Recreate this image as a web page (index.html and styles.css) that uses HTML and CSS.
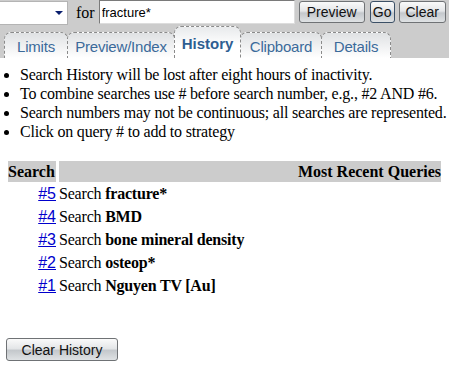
FILE: index.html
```html
<!DOCTYPE html>
<html lang="en">
<head>
    <link rel="stylesheet" href="styles.css">
    <meta charset="UTF-8">
    <title>Search History</title>
</head>
<body>
<div id="head">
    <div class="bar">
        <span class="sel"><span class="arrow"></span></span>
        <span class="for">for</span>
        <input type="text" class="query" value="fracture*">
        <input type="button" class="button btn-preview" value="Preview">
        <input type="button" class="button btn-go" value="Go">
        <input type="button" class="button btn-clear" value="Clear">
    </div>
    <div class="tabs">
        <span class="tab t-limits">Limits</span>
        <span class="tab t-preview">Preview/Index</span>
        <span class="tab active t-history">History</span>
        <span class="tab t-clip">Clipboard</span>
        <span class="tab t-details">Details</span>
    </div>
</div>

<ul class="notes">
    <li>Search History will be lost after eight hours of inactivity.</li>
    <li>To combine searches use # before search number, e.g., #2 AND #6.</li>
    <li>Search numbers may not be continuous; all searches are represented.</li>
    <li>Click on query # to add to strategy</li>
</ul>

<table class="hist">
    <tr>
        <th class="c-num">Search</th>
        <th class="c-q">Most Recent Queries</th>
    </tr>
    <tr><td class="c-num"><a href="#">#5</a></td><td>Search <b>fracture*</b></td></tr>
    <tr><td class="c-num"><a href="#">#4</a></td><td>Search <b>BMD</b></td></tr>
    <tr><td class="c-num"><a href="#">#3</a></td><td>Search <b>bone mineral density</b></td></tr>
    <tr><td class="c-num"><a href="#">#2</a></td><td>Search <b>osteop*</b></td></tr>
    <tr><td class="c-num"><a href="#">#1</a></td><td>Search <b>Nguyen TV [Au]</b></td></tr>
</table>

<input type="button" class="button btn-history" value="Clear History">
</body>
</html>
```

FILE: styles.css
```css
body {
    margin: 0;
    padding: 0;
    background: #fff;
    font-family: "Liberation Serif", "Times New Roman", serif;
    font-size: 16px;
    color: #000;
}

#head {
    background: #cccccc;
    height: 58px;
}

.bar {
    display: flex;
    align-items: flex-start;
    height: 26px;
}

.sel {
    display: block;
    width: 67px;
    height: 22px;
    margin-top: 1px;
    background: #fff;
    border: 1px solid #b4b4b4;
    border-left: 0;
    position: relative;
}

.arrow {
    position: absolute;
    left: 55px;
    top: 9px;
    border-left: 4px solid transparent;
    border-right: 4px solid transparent;
    border-top: 4px solid #0a1f6e;
}

.for {
    margin: 3px 0 0 8px;
    line-height: 20px;
}

.query {
    box-sizing: border-box;
    width: 196px;
    height: 24px;
    margin: 0 0 0 4px;
    padding: 1px 2px;
    border: 1px solid #7a7a7a;
    border-right-color: #ddd;
    border-bottom-color: #ddd;
    font-family: "Liberation Sans", Arial, sans-serif;
    font-size: 13px;
    background: #fff;
}

.button {
    box-sizing: border-box;
    height: 22px;
    margin: 1px 0 0 4px;
    padding: 0 6px;
    border: 1px solid #6f7275;
    border-radius: 3px;
    background: linear-gradient(#fafafa 0%, #e4e6e8 45%, #c4c8cc 55%, #dfe2e4 100%);
    font-family: "Liberation Sans", Arial, sans-serif;
    font-size: 14px;
    color: #111;
}

.btn-preview { width: 66px; }
.btn-go { width: 25px; padding: 0; margin-left: 5px; border-color: #3c5066; }
.btn-clear { width: 47px; padding: 0; }

.tabs {
    display: flex;
    align-items: flex-end;
    height: 32px;
    padding-left: 4px;
}

.tab {
    box-sizing: border-box;
    height: 26px;
    border: 1px dashed #8a8a8a;
    border-bottom: 0;
    border-radius: 7px 7px 0 0;
    background: linear-gradient(#dfe1e3, #ffffff);
    font-family: "Liberation Sans", Arial, sans-serif;
    font-size: 15px;
    letter-spacing: -0.2px;
    color: #3b6a9a;
    text-align: center;
    padding-top: 5px;
    margin-right: -1px;
}

.tab.active {
    height: 32px;
    background: linear-gradient(#e8eaec, #ffffff 60%);
    color: #2e5e92;
    font-weight: bold;
    letter-spacing: 0;
    padding-top: 8px;
    position: relative;
    z-index: 1;
}

.t-limits { width: 64px; }
.t-preview { width: 108px; }
.t-history { width: 67px; }
.t-clip { width: 82px; }
.t-details { width: 70px; }

.notes {
    margin: 7px 0 0;
    padding-left: 20px;
    line-height: 19px;
    letter-spacing: -0.2px;
    white-space: nowrap;
}

.hist {
    margin: 20px 0 0 8px;
    width: 433px;
    border-collapse: separate;
    border-spacing: 0;
}

.hist th {
    background: #cccccc;
    height: 21px;
    padding: 0;
    font-weight: bold;
}

.hist th.c-num {
    width: 48px;
    text-align: left;
    border-right: 3px solid #fff;
}

.hist th.c-q {
    text-align: right;
}

.hist td {
    padding: 0;
    height: 23px;
    white-space: nowrap;
    letter-spacing: -0.2px;
}

.hist td.c-num {
    text-align: right;
    padding-right: 3px;
}

.hist a {
    color: #0000cc;
    font-family: "Liberation Sans", Arial, sans-serif;
    letter-spacing: 0;
}

.btn-history {
    display: block;
    width: 112px;
    height: 23px;
    margin: 41px 0 0 6px;
    font-size: 14px;
}
```
